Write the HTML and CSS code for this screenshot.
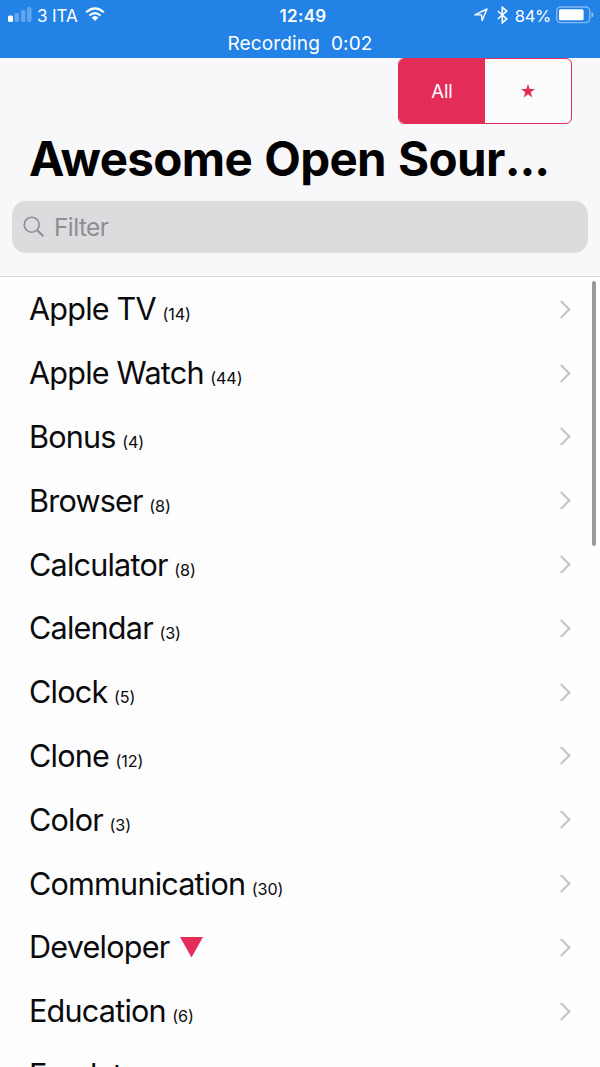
FILE: index.html
```
<!DOCTYPE html>
<html lang="en">
<head>
<meta charset="utf-8">
<title>Awesome Open Source</title>
<link rel="stylesheet" href="styles.css">
</head>
<body>
<div class="screen">
  <header class="status">
    <div class="status-row">
      <div class="carrier">
        <svg class="signal" width="24" height="16" viewBox="0 0 24 16" fill="#fff"><rect x="0" y="8.5" width="5" height="6.5" rx="1.5"/><g opacity=".28"><rect x="6.5" y="6" width="4.5" height="9" rx="1.5"/><rect x="13" y="3" width="4.5" height="12" rx="1.5"/><rect x="19" y="0" width="4.5" height="15" rx="1.5"/></g></svg>
        <span>3 ITA</span>
        <svg class="wifi" width="20" height="15" viewBox="0 0 20 15" fill="none" stroke="#fff" stroke-width="2.2"><path d="M1.1 5.3Q10-2.6 18.9 5.3M4.4 8.5Q10 3.8 15.6 8.5"/><path d="M6.6 10.6Q10 7.6 13.4 10.6L10 14Z" fill="#fff" stroke="none"/></svg>
      </div>
      <span class="time">12:49</span>
      <div class="power">
        <svg class="location" width="14" height="14" viewBox="0 0 14 14" fill="none" stroke="#fff" stroke-width="1.4" stroke-linejoin="round"><path d="M.9 6.9 13 1 8.2 12.6 7.5 6.9Z"/></svg>
        <svg class="bluetooth" width="11" height="18" viewBox="0 0 11 18" fill="none" stroke="#fff" stroke-width="1.6"><path d="M.8 5 9.8 12.9 5.3 16.7V1.3L9.8 5.1.8 13"/></svg>
        <span>84%</span>
        <svg class="battery" width="38" height="18" viewBox="0 0 38 18"><rect x=".7" y="1" width="33" height="15.6" rx="4" fill="none" stroke="#fff" stroke-opacity=".45" stroke-width="1.4"/><rect x="3" y="3.3" width="24.6" height="11" rx="1.5" fill="#fff"/><path d="M35.5 6v5.7q2-.7 2-2.85T35.5 6" fill="#fff" opacity=".5"/></svg>
      </div>
    </div>
    <div class="recording">Recording&nbsp; 0:02</div>
  </header>
  <section class="navbar">
    <div class="segments">
      <button class="segment active">All</button>
      <button class="segment"><svg width="14" height="14" viewBox="0 0 14 14" fill="#e42c58"><path d="M7 0 8.7 5.1H14L9.7 8.3 11.3 13.4 7 10.3 2.7 13.4 4.3 8.3 0 5.1H5.3Z"/></svg></button>
    </div>
    <h1 class="title">Awesome Open Sour<span class="dots">...</span></h1>
    <div class="search">
      <svg width="22" height="22" viewBox="0 0 22 22" fill="none" stroke="#8e8e93"><circle cx="8.7" cy="8.7" r="7.5" stroke-width="1.6"/><path d="m14.2 14.2 6.2 6" stroke-width="2.2"/></svg>
      <span>Filter</span>
    </div>
  </section>
  <ul class="list">
    <li class="row"><span class="name">Apple TV</span><span class="count">(14)</span><span class="chevron"></span></li>
    <li class="row"><span class="name">Apple Watch</span><span class="count">(44)</span><span class="chevron"></span></li>
    <li class="row"><span class="name">Bonus</span><span class="count">(4)</span><span class="chevron"></span></li>
    <li class="row"><span class="name">Browser</span><span class="count">(8)</span><span class="chevron"></span></li>
    <li class="row"><span class="name">Calculator</span><span class="count">(8)</span><span class="chevron"></span></li>
    <li class="row"><span class="name">Calendar</span><span class="count">(3)</span><span class="chevron"></span></li>
    <li class="row"><span class="name">Clock</span><span class="count">(5)</span><span class="chevron"></span></li>
    <li class="row"><span class="name">Clone</span><span class="count">(12)</span><span class="chevron"></span></li>
    <li class="row"><span class="name">Color</span><span class="count">(3)</span><span class="chevron"></span></li>
    <li class="row"><span class="name">Communication</span><span class="count">(30)</span><span class="chevron"></span></li>
    <li class="row"><span class="name">Developer</span><svg class="triangle" width="23" height="21" viewBox="0 0 23 21"><path d="M0 0H23L11.5 20.5Z" fill="#e42c58"/></svg><span class="chevron"></span></li>
    <li class="row"><span class="name">Education</span><span class="count">(6)</span><span class="chevron"></span></li>
    <li class="row"><span class="name">Emulator</span></li>
  </ul>
  <div class="scrollbar"></div>
</div>
</body>
</html>
```
FILE: styles.css
```
* { box-sizing: border-box; }
body { margin: 0; font-family: Inter, "Liberation Sans", sans-serif; background: #fefdff; color: #0b0b0d; }
.screen { position: relative; height: 1067px; overflow: hidden; }
.status { height: 58px; background: #2282e6; color: #fff; font-size: 17px; }
.status-row { display: grid; grid-template-columns: 1fr auto 1fr; align-items: center; height: 31px; padding: 0 7px 0 8px; }
.carrier, .power { display: flex; align-items: center; }
.carrier { gap: 5px; letter-spacing: -0.1px; }
.signal { margin-bottom: 1px; }
.wifi { margin-left: 2px; margin-bottom: 2px; }
.time { font-weight: 600; letter-spacing: 0.3px; padding-left: 5px; }
.power { justify-content: flex-end; font-size: 16.5px; letter-spacing: -0.3px; }
.location { margin-bottom: 2px; }
.bluetooth { margin: 0 9px 2px 9px; }
.battery { margin: 0 0 2px 5px; transform: translateX(1px); }
.power > span { transform: translateX(1px); }
.location, .bluetooth { transform: translateX(3px); }
.recording { text-align: center; font-size: 19px; line-height: 25px; letter-spacing: 0.15px; }
.navbar { height: 219px; background: #f8f7fa; border-bottom: 1px solid #d6d5d8; display: flex; flex-direction: column; }
.segments { display: flex; align-self: flex-end; width: 174px; height: 65.5px; margin-right: 28px; border: 1.5px solid #e42c58; border-radius: 6px; overflow: hidden; background: #fcfbfe; }
.segment { display: flex; flex: 1; align-items: center; justify-content: center; border: 0; padding: 0; background: transparent; color: #fff; font: 400 18.5px Inter, sans-serif; }
.active { background: #e42c58; }
.title { margin: 5.5px 0 0 29px; font-size: 47.5px; line-height: 60px; font-weight: 650; letter-spacing: -0.65px; word-spacing: 1.5px; color: #000; white-space: nowrap; }
.dots { letter-spacing: -1.1px; }
.search { display: flex; align-items: center; gap: 9px; height: 52px; margin: 12px 12px 0; padding: 0 11px; border-radius: 14px; background: #dcdbde; color: #8e8e93; font-size: 24.5px; letter-spacing: -0.6px; }
.list { list-style: none; margin: 0; padding: 0.4px 0 0; }
.row { display: flex; align-items: baseline; height: 63.8px; padding: 0 29px; line-height: 64px; white-space: nowrap; }
.name { font-size: 30.6px; letter-spacing: -0.8px; }
.count { margin-left: 6.5px; font-size: 16.2px; letter-spacing: -0.1px; }
.chevron { margin-left: auto; align-self: center; width: 13px; height: 13px; border: solid #c3c2c6; border-width: 2.5px 2.5px 0 0; transform: translate(-3px, 0) rotate(45deg); }
.triangle { align-self: center; margin-left: 10.5px; }
.scrollbar { position: absolute; left: 592px; top: 281px; width: 4px; height: 265px; border-radius: 2px; background: #9a999c; }
```
